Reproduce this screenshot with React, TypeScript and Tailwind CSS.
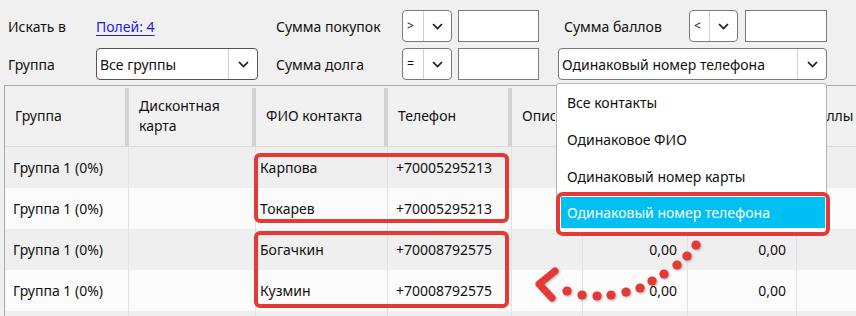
import React from "react";

const rows = [
  { name: "Карпова", phone: "+70005295213" },
  { name: "Токарев", phone: "+70005295213" },
  { name: "Богачкин", phone: "+70008792575" },
  { name: "Кузмин", phone: "+70008792575" },
  { name: "", phone: "" },
];

const dots: [number, number][] = [
  [696, 245],
  [687, 256],
  [677, 265],
  [664, 274],
  [652, 281],
  [640, 288],
  [626, 292],
  [611, 295],
  [597, 296],
  [582, 295],
  [567, 291],
];

function Chevron() {
  return (
    <svg width="11" height="7" viewBox="0 0 11 7">
      <path d="M1 1l4.5 4.5L10 1" fill="none" stroke="#1a1a1a" strokeWidth="1.7" />
    </svg>
  );
}

function Select({ text, className, small }: { text: string; className: string; small?: boolean }) {
  return (
    <div className={`flex h-[32px] items-stretch rounded-[4px] border border-[#7a7a7a] bg-white ${className}`}>
      <div className={`flex flex-1 items-center ${small ? "pl-[4px] text-[12px]" : "pl-[3px]"}`}>{text}</div>
      <div className="w-px bg-[#d0d0d0]" />
      <div className={`flex items-center justify-center ${small ? "w-[27px]" : "w-[28px]"}`}>
        <Chevron />
      </div>
    </div>
  );
}

function Input({ className }: { className: string }) {
  return <div className={`h-[32px] border border-[#7a7a7a] bg-white ${className}`} />;
}

function HeaderCell({ children, last }: { children?: React.ReactNode; last?: boolean }) {
  return (
    <div className="flex items-stretch">
      <div className="flex flex-1 items-center pl-[10px] leading-[20px]">{children}</div>
      {!last && <div className="mt-[2px] w-[4px] bg-[#d3d3d3]" />}
    </div>
  );
}

export default function App() {
  return (
    <div className="relative h-[316px] w-[856px] overflow-hidden bg-[#f0f0f0] font-['Noto_Sans',sans-serif] text-[14px] text-[#111]">
      {/* Filters */}
      <div className="flex flex-col gap-[6px] pl-[8px] pt-[10px]">
        <div className="flex h-[32px] items-center">
          <div className="w-[88px]">Искать в</div>
          <div className="w-[180px]">
            <span className="text-[#1d1de0] underline decoration-[#1d1de0] underline-offset-[3px]">Полей: 4</span>
          </div>
          <div className="w-[126px]">Сумма покупок</div>
          <Select text=">" small className="w-[50px]" />
          <Input className="ml-[6px] w-[81px]" />
          <div className="ml-[25px] w-[125px]">Сумма баллов</div>
          <Select text="<" small className="w-[49px]" />
          <Input className="ml-[7px] w-[82px]" />
        </div>
        <div className="flex h-[32px] items-center">
          <div className="w-[88px]">Группа</div>
          <Select text="Все группы" className="w-[162px] border-[#555]" />
          <div className="ml-[18px] w-[126px]">Сумма долга</div>
          <Select text="=" small className="w-[50px]" />
          <Input className="ml-[6px] w-[81px]" />
          <Select text="Одинаковый номер телефона" className="ml-[19px] w-[269px]" />
        </div>
      </div>

      {/* Table */}
      <div className="ml-[4px] mt-[5px] border-l border-t border-[#a9a9a9]">
        <div className="grid h-[61px] grid-cols-[124px_127px_132px_124px_71px_105px_109px_120px] border-b border-[#d9d9d9] bg-[#f1f1f1]">
          <HeaderCell>Группа</HeaderCell>
          <HeaderCell>
            <span>
              Дисконтная
              <br />
              карта
            </span>
          </HeaderCell>
          <HeaderCell>ФИО контакта</HeaderCell>
          <HeaderCell>Телефон</HeaderCell>
          <HeaderCell>
            <div className="w-[33px] overflow-hidden whitespace-nowrap">Описание</div>
          </HeaderCell>
          <HeaderCell />
          <HeaderCell />
          <HeaderCell last>
            <div className="ml-[20px] overflow-hidden whitespace-nowrap">
              <div className="-ml-[17px]">Баллы</div>
            </div>
          </HeaderCell>
        </div>
        {rows.map((r, i) => (
          <div
            key={i}
            className={`grid h-[41px] grid-cols-[124px_127px_132px_124px_71px_105px_109px_120px] ${
              i % 2 === 0 ? "bg-[#efefef]" : "bg-[#fbfbfb]"
            }`}
          >
            <div className="flex items-center border-r border-[#e2e2e2] pl-[8px]">{r.name ? "Группа 1 (0%)" : ""}</div>
            <div className="border-r border-[#e2e2e2]" />
            <div className="flex items-center border-r border-[#e2e2e2] pl-[4px]">{r.name}</div>
            <div className="flex items-center border-r border-[#e2e2e2] pl-[8px]">{r.phone}</div>
            <div className="border-r border-[#e2e2e2]" />
            <div className="flex items-center justify-end border-r border-[#e2e2e2] pr-[10px]">{r.name && i > 1 ? "0,00" : ""}</div>
            <div className="flex items-center justify-end border-r border-[#e2e2e2] pr-[10px]">{r.name && i > 1 ? "0,00" : ""}</div>
            <div />
          </div>
        ))}
      </div>

      {/* Annotation boxes */}
      <div className="absolute left-[254px] top-[153px] h-[70px] w-[255px] rounded-[6px] border-[4px] border-[#e53935]" />
      <div className="absolute left-[254px] top-[231px] h-[77px] w-[255px] rounded-[6px] border-[4px] border-[#e53935]" />

      {/* Dropdown list */}
      <div className="absolute left-[556px] top-[83px] h-[151px] w-[271px] rounded-[3px] border border-[#b4b4b4] bg-white">
        <div className="flex h-[37px] items-center pl-[10px]">Все контакты</div>
        <div className="flex h-[37px] items-center pl-[10px]">Одинаковое ФИО</div>
        <div className="flex h-[37px] items-center pl-[10px]">Одинаковый номер карты</div>
        <div className="ml-[4px] mt-[2px] flex h-[31px] w-[264px] items-center bg-[#00bff3] pl-[6px] text-white">
          Одинаковый номер телефона
        </div>
      </div>
      <div className="absolute left-[556px] top-[192px] h-[44px] w-[274px] rounded-[7px] border-[4px] border-[#e53935]" />

      {/* Dotted arrow */}
      <svg
        className="pointer-events-none absolute left-0 top-0 drop-shadow-[1px_1px_1px_rgba(0,0,0,0.3)]"
        width="856"
        height="316"
        viewBox="0 0 856 316"
      >
        {dots.map(([x, y], i) => (
          <circle key={i} cx={x} cy={y} r="4.6" fill="#e53935" />
        ))}
        <path
          d="M555 271L539 284L552 298"
          fill="none"
          stroke="#e53935"
          strokeWidth="7"
          strokeLinecap="round"
          strokeLinejoin="round"
        />
      </svg>
    </div>
  );
}
